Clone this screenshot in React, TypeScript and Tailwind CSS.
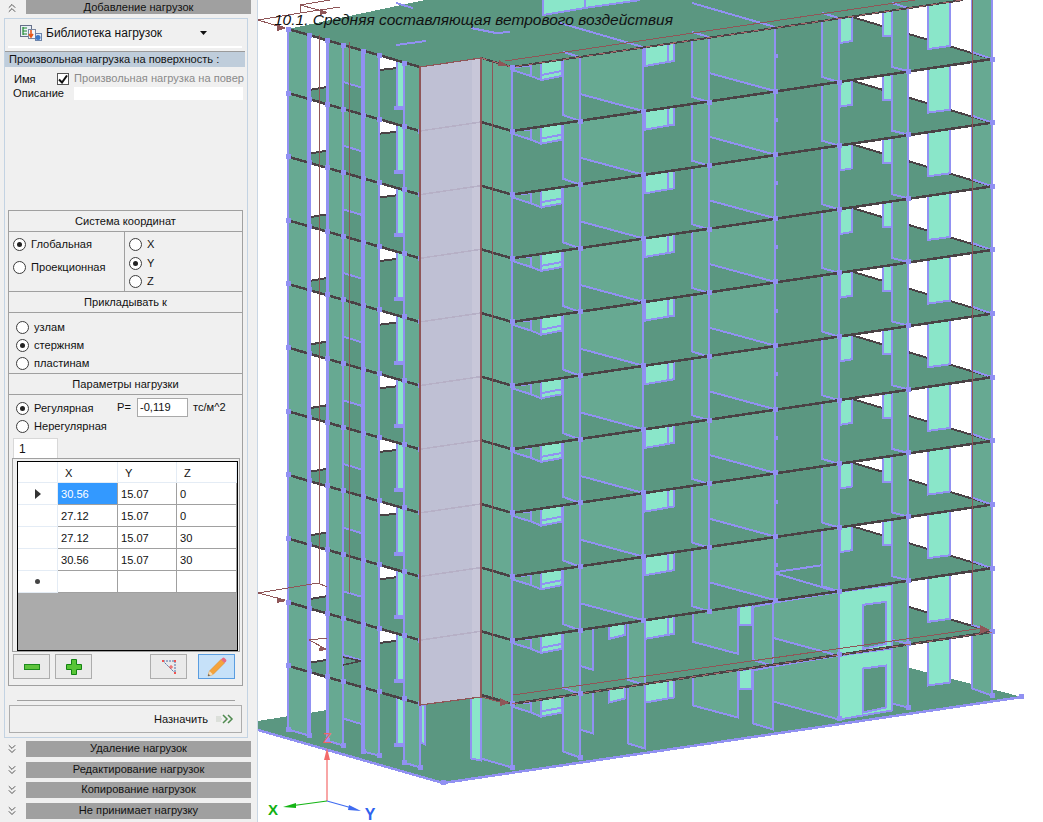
import React from 'react';
import { ChevronsDown, ChevronsUp } from 'lucide-react';

const Q = 63.65;
const WALL = '#67a992';
const SLAB = '#5b9781';
const MINT = '#8ae6c9';
const PUR = '#9191f2';
const DARK = '#4a4245';
const RED = '#8f5658';

const shift = (p: number[], dy: number) =>
  p.map((v, k) => (k % 2 ? v + dy : v)).join(' ');

function Poly({ p, dy = 0, f, s = PUR, w = 2 }: { p: number[]; dy?: number; f: string; s?: string; w?: number }) {
  return <polygon points={shift(p, dy)} fill={f} stroke={s} strokeWidth={w} />;
}
function Line({ p, dy = 0, s = PUR, w = 2, dash }: { p: number[]; dy?: number; s?: string; w?: number; dash?: string }) {
  return <polyline points={shift(p, dy)} fill="none" stroke={s} strokeWidth={w} strokeDasharray={dash} />;
}

const NODES = [288, 93, 309, 99, 327, 104, 343, 109, 363, 115, 379, 119, 404, 126, 420, 131, 512, 131, 580, 121, 643, 111, 709, 102, 775, 91, 839, 82, 908, 71, 992, 59];

function Nodes({ dy, low }: { dy: number; low: boolean }) {
  return (
    <>
      {NODES.map((v, k) =>
        k % 2 === 0 && !(low && (v === 643 || v === 709 || v === 775)) ? (
          <rect key={k} x={v - 2.5} y={NODES[k + 1] + dy - 2.5} width={5} height={5} fill={PUR} />
        ) : null,
      )}
    </>
  );
}

function Storey({ i }: { i: number }) {
  const dy = (i - 1) * Q;
  const low = i >= 10;
  const ground = i === 11;
  return (
    <g>
      {!ground && (
        <>
          <polygon
            points={shift([288, 93, 340, 85.5, 340, 75, 380, 70, 397, 68, 833, 11, 852, 17, 992, 59, 512, 131, 481, 122, 420, 131], dy)}
            fill={SLAB}
          />
          <Line p={[309, 90, 327, 87]} dy={dy} s={DARK} />
          <Line p={[380, 70, 397, 68]} dy={dy} s={DARK} />
          <Line p={[852, 17, 992, 59]} dy={dy} s={DARK} />
        </>
      )}
      {/* left wing */}
      <Poly p={[288, 29, 309, 35, 309, 99, 288, 93]} dy={dy} f={WALL} />
      <Poly p={[343, 45, 363, 51, 363, 88, 343, 82]} dy={dy} f={WALL} />
      <Poly p={[327, 40, 343, 45, 343, 109, 327, 104]} dy={dy} f={WALL} />
      <Poly p={[363, 51, 379, 55, 379, 119, 363, 115]} dy={dy} f={WALL} />
      <Poly p={[397, 61, 404, 63, 404, 108, 397, 108]} dy={dy} f={MINT} />
      <Poly p={[404, 63, 420, 67, 420, 131, 404, 126]} dy={dy} f={WALL} />
      <Line p={[309, 35, 309, 99]} dy={dy} w={3.5} />
      <Line p={[327, 40, 327, 104]} dy={dy} w={3} />
      <Line p={[363, 51, 363, 115]} dy={dy} w={3.5} />
      <rect x={394} y={106 + dy} width={9} height={4} fill={PUR} />
      {ground && (
        <>
          <Poly p={[421, 68, 425, 68, 425, 108, 421, 106]} dy={dy} f={MINT} />
          <Poly p={[471, 60, 481, 60, 481, 124, 471, 122]} dy={dy} f={MINT} />
        </>
      )}
      {/* right wing */}
      <Poly p={[481, 58, 512, 67, 512, 131, 481, 122]} dy={dy} f={WALL} />
      <Poly p={[512, 67, 531, 66, 531, 76, 512, 70]} dy={dy} f={WALL} />
      <Poly p={[531, 60, 541, 60, 541, 80, 531, 76]} dy={dy} f={WALL} />
      <Poly p={[541, 60, 562, 56, 562, 76, 541, 80]} dy={dy} f={MINT} />
      <Line p={[541, 75, 562, 71]} dy={dy} />
      <Poly p={[563, 52, 580, 57, 580, 121, 563, 115]} dy={dy} f={WALL} />
      {low ? (
        <>
          <Poly p={[609, 52, 625, 50, 625, 62, 609, 66]} dy={dy} f={MINT} />
          <Poly p={[580, 30, 593, 34, 593, 97, 580, 93]} dy={dy} f={WALL} />
          <Poly p={[628, 50, 645, 47, 645, 112, 628, 107]} dy={dy} f={WALL} />
        </>
      ) : (
        <Poly p={[580, 30, 643, 47, 643, 111, 580, 94]} dy={dy} f={WALL} />
      )}
      <Poly p={[645, 47, 668, 44, 668, 62, 645, 66]} dy={dy} f={MINT} />
      <Poly p={[668, 44, 674, 43, 674, 61, 668, 62]} dy={dy} f={MINT} />
      {low ? (
        <>
          <Poly p={[693, 5, 738, 17, 738, 81, 693, 69]} dy={dy} f={WALL} />
          <Poly p={[739, 34, 752, 32, 752, 52, 739, 52]} dy={dy} f={MINT} />
          <Poly p={[773, 30, 839, 19, 839, 83, 773, 65]} dy={dy} f={WALL} />
          <Poly p={[753, 34, 773, 30, 773, 93, 753, 87]} dy={dy} f={WALL} />
          <Poly p={[839, 19, 892, 12, 892, 74, 839, 83]} dy={dy} f={MINT} />
          <Poly p={[863, 32, 886, 29, 886, 71, 863, 76]} dy={dy} f={SLAB} />
        </>
      ) : (
        <>
          <Poly p={[692, 32, 709, 37, 709, 102, 692, 97]} dy={dy} f={WALL} />
          <Poly p={[709, 9.6, 775, 27, 775, 91, 709, 73]} dy={dy} f={WALL} />
          <rect x={775} y={54 + dy} width={3} height={4} fill={PUR} />
          <Poly p={[840, 18, 852, 17, 852, 41, 840, 43]} dy={dy} f={MINT} />
          <Poly p={[883, 12, 892, 11, 892, 36, 883, 36]} dy={dy} f={MINT} />
          <Poly p={[822, 13, 839, 18, 839, 82, 822, 77]} dy={dy} f={WALL} />
          {i === 9 && (
            <>
              <Line p={[775, 63, 822, 56]} dy={dy} />
              <Line p={[775, 64, 839, 83]} dy={dy} />
            </>
          )}
        </>
      )}
      <Poly p={[892, 3, 908, 8, 908, 71, 892, 67]} dy={dy} f={WALL} />
      <Poly p={[928, -15, 950, -18, 950, 46, 928, 49]} dy={dy} f={MINT} />
      <Poly p={[972, -12, 992, -5, 992, 59, 972, 52]} dy={dy} f={WALL} />
      {!ground && (
        <>
          <Line p={[288, 93, 420, 131]} dy={dy} s={DARK} w={2.5} />
          <Line p={[481, 122, 512, 131, 992, 59]} dy={dy} s={DARK} w={2.5} />
        </>
      )}
      <Nodes dy={dy} low={low} />
    </g>
  );
}

function Building() {
  const floors = [11, 10, 9, 8, 7, 6, 5, 4, 3, 2, 1];
  return (
    <svg viewBox="258 0 785 822" className="block h-[822px] w-[785px]" shapeRendering="crispEdges">
      {/* ground plate */}
      <polygon
        points="258,730 443,783 1022,697 852,653 833,647 397,690 340,698 340,708 258,721"
        fill={SLAB}
      />
      <Line p={[258, 730, 443, 783, 1022, 697]} w={2.5} />
      <rect x={441} y={780} width={5} height={5} fill={PUR} />
      <rect x={1019} y={694} width={5} height={5} fill={PUR} />
      {floors.map((i) => (
        <Storey key={i} i={i} />
      ))}
      {/* roof slab */}
      <polygon points="288,29 420,67 481,58 512,67 963,0 425,0" fill={SLAB} />
      <polygon points="543,0 640,0 585,8 543,15" fill={MINT} />
      <Line p={[543, 0, 543, 15, 585, 8, 640, 0]} w={2} />
      <Line p={[585, 0, 585, 8]} />
      <Line p={[396, 45, 426, 41]} />
      <Line p={[471, 28, 496, 33, 510, 32]} />
      <Line p={[396, 3, 413, 8]} />
      <Line p={[560, 23, 643, 47]} />
      <Line p={[692, 3, 775, 27]} />
      <Line p={[692, 32, 709, 37]} />
      <Line p={[822, 13, 839, 18]} />
      <Line p={[892, 3, 908, 8]} />
      <Line p={[563, 52, 580, 57]} />
      <Line p={[288, 29, 420, 67]} s={DARK} w={2.5} />
      <Line p={[481, 58, 512, 67, 963, 0]} s={DARK} w={2} />
      <Line p={[481, 58, 512, 67, 963, 0]} s="#a86a6c" w={1} dash="6 6" />
      <Line p={[505, 61, 955, -6]} s={RED} w={1} />
      {[288, 29, 309, 35, 327, 40, 343, 45, 363, 51, 379, 55, 404, 63, 512, 67].map((v, k, a) =>
        k % 2 === 0 ? <rect key={k} x={v - 2.5} y={a[k + 1] - 2.5} width={5} height={5} fill={PUR} /> : null,
      )}
      <polygon points="499,60 509,66 498,66" fill={RED} />
      {/* lift shaft */}
      <polygon points="420,67 481,58 481,697 420,705" fill="#bfc0d4" />
      <polygon points="472,59 481,58 481,697 472,698" fill="#c8c7d9" />
      {[1, 2, 3, 4, 5, 6, 7, 8, 9].map((i) => (
        <Line key={i} p={[420, 131, 481, 122]} dy={(i - 1) * Q} s="#b6b0c6" w={1.5} />
      ))}
      <polygon points="420,67 481,58 481,697 420,705" fill="none" stroke={RED} strokeWidth={1.2} />
      {/* loads */}
      <Line p={[492, 61, 492, 698]} s={RED} w={1} />
      <Line p={[319, 35, 319, 583]} s={RED} w={1} />
      <Line p={[349, 42, 349, 593]} s={RED} w={1} />
      <Line p={[972, 0, 972, 625]} s={RED} w={1} />
      <Line p={[513, 695, 983, 628]} s={RED} w={1} />
      <Line p={[512, 704, 992, 632]} s="#a86a6c" w={1} dash="6 6" />
      <polygon points="980,625 990,630 980,634" fill={RED} />
      <Line p={[481, 697, 504, 703]} s={RED} w={1} />
      <polygon points="500,698 510,703 500,706" fill={RED} />
      <Line p={[258, 20, 300, 13, 340, 7]} s={RED} w={1} />
      <Line p={[258, 20, 284, 28]} s={RED} w={1} />
      <polygon points="277,24 286,28 277,31" fill={RED} />
      <Line p={[300, 13, 300, 5, 326, 12]} s={RED} w={1} />
      <Line p={[300, 5, 330, 0]} s={RED} w={1} />
      <polygon points="320,9 328,13 320,15" fill={RED} />
      <Line p={[258, 593, 318, 583, 327, 587]} s={RED} w={1} />
      <Line p={[258, 593, 285, 600]} s={RED} w={1} />
      <polygon points="277,597 286,601 277,603" fill={RED} />
      <Line p={[309, 640, 327, 638]} s={RED} w={1} />
      <Line p={[309, 640, 326, 649]} s={RED} w={1} />
      <polygon points="320,646 327,650 319,651" fill={RED} />
      <Line p={[343, 657, 361, 661, 343, 665]} s={DARK} w={1.5} />
      {/* axes */}
      <g shapeRendering="geometricPrecision">
        <line x1={327} y1={801} x2={327} y2={755} stroke="#f36b6b" strokeWidth={1.2} />
        <polygon points="327,748 324,760 330,760" fill="#f36b6b" />
        <line x1={327} y1={801} x2={290} y2={806} stroke="#14b414" strokeWidth={1.2} />
        <polygon points="283,807 296,803 296,808" fill="#14b414" />
        <line x1={327} y1={801} x2={352} y2={808} stroke="#3f6bf0" strokeWidth={1.2} />
        <polygon points="361,811 349,805 348,810" fill="#3f6bf0" />
        <text x={327} y={743} fontSize={15} fill="#ef6666" textAnchor="middle" fontFamily="'Liberation Sans', sans-serif">Z</text>
        <text x={273} y={815} fontSize={15} fontWeight={700} fill="#12b012" textAnchor="middle" fontFamily="'Liberation Sans', sans-serif">X</text>
        <text x={370} y={820} fontSize={16} fontWeight={700} fill="#2f62ee" textAnchor="middle" fontFamily="'Liberation Sans', sans-serif">Y</text>
      </g>
    </svg>
  );
}

function Radio({ on }: { on?: boolean }) {
  return (
    <span className="flex h-[13px] w-[13px] shrink-0 items-center justify-center rounded-full border border-[#3c3c3c] bg-white">
      {on && <span className="h-[5px] w-[5px] rounded-full bg-[#222]" />}
    </span>
  );
}

function RadioRow({ on, label, className = '' }: { on?: boolean; label: string; className?: string }) {
  return (
    <div className={`flex h-[13px] items-center gap-[5px] ${className}`}>
      <Radio on={on} />
      <span>{label}</span>
    </div>
  );
}

function GroupTitle({ children }: { children: React.ReactNode }) {
  return <div className="flex h-[21px] items-center justify-center border-b border-[#a0a0a0] pt-[2px]">{children}</div>;
}

function Bar({ label, up }: { label: string; up?: boolean }) {
  return (
    <div className="flex h-[16px] items-center">
      <div className="flex w-[26px] justify-center pr-[2px] text-[#222]">
        {up ? <ChevronsUp size={14} strokeWidth={1.3} /> : <ChevronsDown size={14} strokeWidth={1.3} />}
      </div>
      <div className="flex h-full w-[225px] items-center justify-center bg-[#a0a0a0] text-[#111]">{label}</div>
    </div>
  );
}

const ROWS = [
  ['30.56', '15.07', '0'],
  ['27.12', '15.07', '0'],
  ['27.12', '15.07', '30'],
  ['30.56', '15.07', '30'],
  ['', '', ''],
];

function DataGrid() {
  const cols = 'grid grid-cols-[40px_60px_59px_60px]';
  return (
    <div className="mx-[4px] mt-[2px] flex h-[190px] w-[221px] flex-col border-[1.5px] border-black bg-[#ababab]">
      <div className={`${cols} h-[21px] bg-white`}>
        {['', 'X', 'Y', 'Z'].map((h, k) => (
          <div key={k} className="flex items-center border-b border-r border-[#e4ecf5] pl-[7px] pt-[3px]">
            {h}
          </div>
        ))}
      </div>
      {ROWS.map((r, k) => (
        <div key={k} className={`${cols} h-[22px]`}>
          <div className="flex items-center justify-center border-b border-r border-[#e4ecf5] bg-white">
            {k === 0 && (
              <svg width="6" height="10" viewBox="0 0 6 10">
                <polygon points="0,0 6,5 0,10" fill="#333" />
              </svg>
            )}
            {k === 4 && <span className="h-[5px] w-[5px] rounded-full bg-[#444]" />}
          </div>
          {r.map((c, j) => (
            <div
              key={j}
              className={`flex items-center border-b border-r border-[#a0a0a0] pl-[3px] pt-[2px] ${
                k === 0 && j === 0 ? 'bg-[#3399ff] text-white' : 'bg-white'
              }`}
            >
              {c}
            </div>
          ))}
        </div>
      ))}
    </div>
  );
}

function ToolButton({ children, active, className = '' }: { children: React.ReactNode; active?: boolean; className?: string }) {
  return (
    <div
      className={`flex h-[25px] w-[37px] items-center justify-center border ${
        active ? 'border-[#5a9de0] bg-[#c6e1f9]' : 'border-[#adadad] bg-[#eaeaea]'
      } ${className}`}
    >
      {children}
    </div>
  );
}

function Sidebar() {
  return (
    <div className="flex h-[822px] w-[258px] shrink-0 flex-col border-r border-[#c9d6e4] bg-[#f0f0f0] font-['Liberation_Sans',sans-serif] text-[11.1px] leading-none text-[#111]">
      <div className="h-[14px] overflow-hidden">
        <Bar label="Добавление нагрузок" up />
      </div>
      <div className="ml-[4px] mt-[4px] h-[720px] w-[244px] border border-[#c3d3e3]">
        <div className="flex h-[27px] items-center pl-[15px]">
          <svg width="22" height="16" viewBox="0 0 22 16" className="shrink-0">
            <rect x="0.5" y="0.5" width="11" height="11" fill="#e8eef6" stroke="#66708a" />
            <path d="M3 3h4M3 6h4M3 9h4M3 2v8" stroke="#1d8a2e" strokeWidth="1.2" fill="none" />
            <rect x="8.5" y="4.5" width="7" height="9" fill="#f4f6fa" stroke="#7b87a0" />
            <path d="M11 5v6M9 9l2 3 2-3" stroke="#e8591a" strokeWidth="1.6" fill="none" />
            <rect x="15.5" y="8.5" width="6" height="7" fill="#dfe9f6" stroke="#6d84ab" />
            <circle cx="18" cy="12.5" r="2.5" fill="#3a78c8" />
          </svg>
          <span className="ml-[4px] text-[12px]">Библиотека нагрузок</span>
          <svg width="7" height="4" viewBox="0 0 7 4" className="ml-[38px]">
            <polygon points="0,0 7,0 3.5,4" fill="#111" />
          </svg>
        </div>
        <div className="mx-[3px] h-[2px] w-[234px] bg-white" />
        <div className="mt-[3px] flex h-[16px] w-[240px] items-center border-t border-[#9a9a9a] bg-[#bfcddb] pl-[4px]">
          Произвольная нагрузка на поверхность :
        </div>
        <div className="mt-[5px] flex h-[14px] items-center">
          <span className="ml-[9px] w-[43px] pt-[2px]">Имя</span>
          <span className="flex h-[12px] w-[12px] items-center justify-center border border-[#555] bg-white">
            <svg width="10" height="9" viewBox="0 0 10 9">
              <path d="M1 4.5l3 3 5-7" stroke="#111" strokeWidth="2" fill="none" />
            </svg>
          </span>
          <span className="ml-[5px] whitespace-nowrap text-[#8a8a8a]">Произвольная нагрузка на повер</span>
        </div>
        <div className="flex h-[14px] items-center">
          <span className="ml-[8px] w-[61px] pt-[2px]">Описание</span>
          <span className="h-[13px] w-[169px] bg-white" />
        </div>
        <div className="ml-[3px] mt-[110px] h-[476px] w-[235px] border border-[#a0a0a0]">
          <GroupTitle>Система координат</GroupTitle>
          <div className="flex h-[60px] border-b border-[#a0a0a0]">
            <div className="flex w-[116px] flex-col gap-[10px] border-r border-[#a0a0a0] pl-[4px] pt-[6px]">
              <RadioRow on label="Глобальная" />
              <RadioRow label="Проекционная" />
            </div>
            <div className="flex flex-col gap-[5px] pl-[4px] pt-[6px]">
              <RadioRow label="X" className="mb-[1px]" />
              <RadioRow on label="Y" />
              <RadioRow label="Z" />
            </div>
          </div>
          <GroupTitle>Прикладывать к</GroupTitle>
          <div className="flex h-[61px] flex-col gap-[5px] border-b border-[#a0a0a0] pl-[7px] pt-[8px]">
            <RadioRow label="узлам" />
            <RadioRow on label="стержням" />
            <RadioRow label="пластинам" />
          </div>
          <GroupTitle>Параметры нагрузки</GroupTitle>
          <div className="relative h-[43px] pl-[7px] pt-[7px]">
            <div className="flex flex-col gap-[5px]">
              <RadioRow on label="Регулярная" />
              <RadioRow label="Нерегулярная" />
            </div>
            <div className="absolute left-[108px] top-[3px] flex h-[19px] items-center">
              <span className="w-[20px]">P=</span>
              <span className="flex h-[19px] w-[51px] items-center border border-[#a9a9a9] bg-white pl-[2px]">-0,119</span>
              <span className="ml-[5px]">тс/м^2</span>
            </div>
          </div>
          <div className="ml-[4px] flex h-[20px] w-[45px] items-center border border-b-0 border-[#d8d8d8] bg-white pl-[5px] pt-[1px] text-[12px]">1</div>
          <div className="ml-[3px] h-[194px] w-[228px] border border-[#a0a0a0]">
            <DataGrid />
          </div>
          <div className="mt-[2px] flex pl-[4px]">
            <ToolButton>
              <svg width="16" height="6" viewBox="0 0 16 6">
                <rect x="0.5" y="0.5" width="15" height="5" fill="#5ec33c" stroke="#1d8a1d" />
              </svg>
            </ToolButton>
            <ToolButton className="ml-[5px]">
              <svg width="16" height="16" viewBox="0 0 16 16">
                <path d="M5.5.5h5v5h5v5h-5v5h-5v-5h-5v-5h5z" fill="#58c536" stroke="#128312" />
              </svg>
            </ToolButton>
            <ToolButton className="ml-[58px]">
              <svg width="14" height="14" viewBox="0 0 14 14">
                <path d="M1 1h12v12z" fill="none" stroke="#4a6fa8" strokeDasharray="2 1" />
                <rect x="0" y="0" width="2" height="2" fill="#ef5350" />
                <rect x="12" y="0" width="2" height="2" fill="#ef5350" />
                <rect x="12" y="12" width="2" height="2" fill="#ef5350" />
                <path d="M9 5v4M7 7h4" stroke="#ef5350" />
              </svg>
            </ToolButton>
            <ToolButton active className="ml-[11px]">
              <svg width="22" height="22" viewBox="0 0 22 22">
                <path d="M2 20l1.5-5L15 3.5l3.5 3.5L7 18.5z" fill="#f5a33c" stroke="#d98a2a" strokeWidth="0.6" />
                <path d="M15 3.5l1.5-1.5a1.5 1.5 0 0 1 2 0l1.5 1.5a1.5 1.5 0 0 1 0 2L18.500 7z" fill="#ea6a80" />
                <path d="M2 20l1.500-5 3.500 3.500z" fill="#f2dcb8" />
                <path d="M2 20l.6-2 1.400 1.400z" fill="#444" />
              </svg>
            </ToolButton>
          </div>
        </div>
        <div className="ml-[12px] mt-[14px] h-[1px] w-[218px] bg-[#a0a0a0]" />
        <div className="ml-[4px] mt-[4px] flex h-[28px] w-[233px] items-center justify-end border border-[#adadad] pr-[7px]">
          <span className="pt-[1px]">Назначить</span>
          <svg width="18" height="10" viewBox="0 0 18 10" className="ml-[8px]">
            <path d="M0 3h5M0 5h6M0 7h5" stroke="#c7cfc4" />
            <path d="M7 1l4 4-4 4M12 1l4 4-4 4" stroke="#4f8a4f" strokeWidth="1.5" fill="none" />
          </svg>
        </div>
      </div>
      <div className="mt-[3px] flex flex-col gap-[4.500px]">
        <Bar label="Удаление нагрузок" />
        <Bar label="Редактирование нагрузок" />
        <Bar label="Копирование нагрузок" />
        <Bar label="Не принимает нагрузку" />
      </div>
    </div>
  );
}

export default function App() {
  return (
    <div className="flex h-[822px] w-[1043px] overflow-hidden bg-white">
      <Sidebar />
      <div className="relative h-[822px] w-[785px] overflow-hidden">
        <Building />
        <div className="absolute left-[16px] top-[10px] whitespace-nowrap font-['Liberation_Sans',sans-serif] text-[15.5px] italic leading-[19px] text-[#111]">
          10.1. Средняя составляющая ветрового воздействия
        </div>
      </div>
    </div>
  );
}
